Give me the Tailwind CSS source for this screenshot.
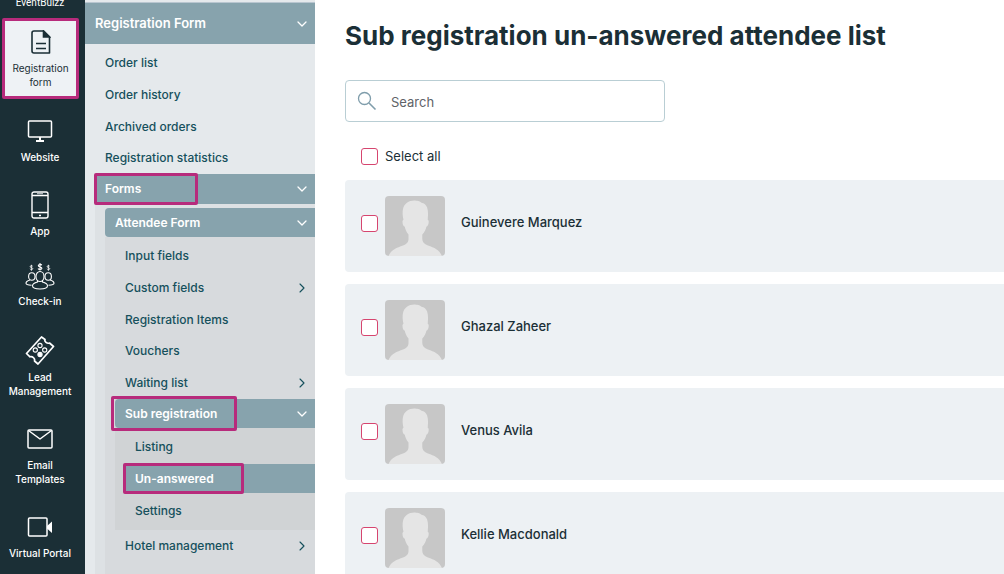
<!DOCTYPE html>
<html lang="en">
<head>
  <meta charset="utf-8">
  <meta name="viewport" content="width=device-width, initial-scale=1">
  <title>Sub registration un-answered attendee list</title>
  <script src="https://cdn.jsdelivr.net/npm/@tailwindcss/browser@4"></script>
</head>
<body class="bg-white font-[Inter,sans-serif] text-[#1b2f36]">

<!-- Shared shapes -->
<svg class="hidden" aria-hidden="true">
  <symbol id="chevron-down" viewBox="0 0 10 6">
    <path fill="none" stroke="currentColor" stroke-width="1.3" stroke-linecap="round" stroke-linejoin="round" d="m1 1 4 4 4-4"/>
  </symbol>
  <symbol id="chevron-right" viewBox="0 0 6 10">
    <path fill="none" stroke="currentColor" stroke-width="1.1" stroke-linecap="round" stroke-linejoin="round" d="m1 1 4 4-4 4"/>
  </symbol>
  <symbol id="avatar" viewBox="0 0 60 60">
    <rect width="60" height="60" fill="#c7c7c7"/>
    <path fill="#e5e5e5" d="M3.500 60C6 54 12 51.500 18 49.500c4-1.400 5.500-3.500 5.500-6.500v-4.500c-2-2.200-3.200-5-3.700-7.700-1.800-.6-2.300-3-2.300-5 0-1 .3-1.800 1-2C17.500 20 17.300 16 18 13 19.300 7.500 23.500 4.500 29.500 4.500c3 0 5.500.8 7 2.200 5.500.8 7.500 6.300 6.200 17 .7.300 1 1 1 2.100 0 2.200-.7 4.400-2.300 5-.5 2.700-1.900 5.600-4.100 7.700V43c0 3 1.700 5.100 5.700 6.500 6 2 11.500 4.500 14 10.500z"/>
  </symbol>
</svg>

<div class="flex h-screen overflow-hidden">

  <!-- Icon rail -->
  <nav class="w-[85px] shrink-0 bg-[#1b2f36] text-center text-[10px] leading-[14px] font-medium text-white" aria-label="Main">
    <div class="flex h-[18px] items-end justify-center overflow-hidden pr-[5px] pb-2 font-[Roboto,sans-serif] font-normal">EventBuizz</div>
    <a href="#" class="ml-[2px] flex h-[81px] w-[77px] flex-col items-center rounded-xs border-3 border-[#b72b7c] bg-[#eef2f5] pt-[9px] font-normal text-[#1b2f36]">
      <svg class="mb-[7px] h-[24px] w-[20px]" viewBox="0 0 20 24" fill="none" stroke="currentColor" stroke-width="1.6">
        <path stroke-linejoin="round" d="M3 1h9.500l6 6v16H3a2 2 0 0 1-2-2V3a2 2 0 0 1 2-2z"/>
        <path fill="currentColor" d="M12.500 1v6h6z"/>
        <path d="M5 13.500h10M5 18.500h10"/>
      </svg>
      Registration<br>form
    </a>
    <a href="#" class="flex h-[84px] flex-col items-center pt-[21px] pr-[5px]">
      <svg class="mb-[8px] h-[22px] w-[26px]" viewBox="0 0 26 22" fill="none" stroke="currentColor" stroke-width="1.500">
        <rect x="1.500" y="1" width="23" height="16" rx="1"/>
        <path d="M13 17v4M9 21h8" stroke-width="2"/>
      </svg>
      Website
    </a>
    <a href="#" class="flex h-[71px] flex-col items-center pt-[8px] pr-[5px]">
      <svg class="mb-[5px] h-[28px] w-[18px]" viewBox="0 0 18 28" fill="none" stroke="currentColor" stroke-width="1.400">
        <rect x="1" y="1" width="16" height="26" rx="2"/>
        <path d="M1 4.500h16M1 21.500h16M8 24.500h2"/>
        <path d="M6 2.700h6" stroke-width=".8"/>
      </svg>
      App
    </a>
    <a href="#" class="flex h-[73px] flex-col items-center pt-[8px] pr-[5px]">
      <svg class="mb-[4px] h-[28px] w-[30px]" viewBox="0 0 30 28" fill="none" stroke="currentColor" stroke-width="1.100">
        <path d="M16.800 3.200c-.4-1-3.500-1.200-3.500.4 0 1.800 3.600.9 3.600 2.700 0 1.500-3.400 1.500-3.800.2M15 1v7.500"/>
        <path stroke-width=".8" d="M7.700 4.300c-.3-.8-2.500-.9-2.500.3 0 1.400 2.600.8 2.600 2.100 0 1.200-2.500 1.100-2.700.1M6.400 2.800v6M24.700 4.300c-.3-.8-2.500-.9-2.500.3 0 1.400 2.600.8 2.600 2.100 0 1.200-2.500 1.100-2.700.1M23.400 2.800v6"/>
        <ellipse cx="15" cy="14.500" rx="4" ry="5"/>
        <path d="M12.500 18.500v1.500c-3 .8-5 1.900-5 3.700 0 4.300 15 4.300 15 0 0-1.800-2-2.900-5-3.700v-1.500"/>
        <ellipse cx="6.800" cy="14.500" rx="3.200" ry="3.800"/>
        <ellipse cx="23.200" cy="14.500" rx="3.200" ry="3.800"/>
        <path d="M5 18c-2.800.8-4 1.800-4 3.200 0 1.100 2 1.900 5.500 2M25 18c2.800.8 4 1.800 4 3.200 0 1.100-2 1.900-5.500 2"/>
      </svg>
      Check-in
    </a>
    <a href="#" class="flex h-[94px] flex-col items-center pt-[8px] pr-[5px]">
      <svg class="mb-[5px] h-[30px] w-[30px]" viewBox="0 0 30 30" fill="none" stroke="currentColor" stroke-width="1.700" stroke-linejoin="round">
        <path d="M16.500 2 20 4.500c-.8 2 2 4.500 4.500 3.500l4 3.500L13 29l-3.500-3c.8-2.500-2.200-5-4.500-4.200L1.500 18.500z"/>
        <g stroke-width="1.100">
          <circle cx="15" cy="10.500" r="2.100"/>
          <circle cx="10.300" cy="15" r="2.100"/>
          <circle cx="19.700" cy="15" r="2.100"/>
          <circle cx="15" cy="19.500" r="2.100" fill="currentColor"/>
        </g>
      </svg>
      Lead<br>Management
    </a>
    <a href="#" class="flex h-[88px] flex-col items-center pt-[8px] pr-[5px]">
      <svg class="mb-[9px] h-[20px] w-[26px]" viewBox="0 0 26 20" fill="none" stroke="currentColor" stroke-width="1.500" stroke-linejoin="round">
        <rect x="1" y="1" width="24" height="18" rx="1"/>
        <path d="m1.500 1.500 11.500 8.500L24.500 1.500"/>
      </svg>
      Email<br>Templates
    </a>
    <a href="#" class="flex h-[84px] flex-col items-center pt-[8px] pr-[5px]">
      <svg class="mb-[9px] h-[20px] w-[26px]" viewBox="0 0 26 20" fill="none" stroke="currentColor" stroke-width="1.500">
        <rect x="1.500" y="1" width="18.500" height="18" rx="1"/>
        <path fill="currentColor" stroke="none" d="M20 9 25 4.500v11.500L20 11.500z"/>
      </svg>
      Virtual Portal
    </a>
  </nav>

  <!-- Section menu -->
  <nav class="w-[230px] shrink-0 bg-[#e5e9ec] text-[12px] font-medium text-[#15505c]" aria-label="Registration form">
    <div class="h-[3px] border-b border-[#b9c6d0]"></div>
    <button type="button" class="flex h-[41px] w-full items-center justify-between bg-[#87a3ad] pr-[8px] pl-[10px] text-[13px] font-semibold text-white">
      Registration Form
      <svg class="h-[6px] w-[10px]"><use href="#chevron-down"/></svg>
    </button>
    <ul class="pt-[3px]">
      <li><a href="#" class="flex h-8 items-center pl-5">Order list</a></li>
      <li><a href="#" class="flex h-8 items-center pl-5">Order history</a></li>
      <li><a href="#" class="flex h-[31px] items-center pl-5">Archived orders</a></li>
      <li><a href="#" class="flex h-8 items-center pl-5">Registration statistics</a></li>
      <li class="ml-[10px] bg-[#dde1e4]">
        <button type="button" class="relative flex h-[30px] w-full items-center justify-between bg-[#87a3ad] pr-[8px] pl-[10px] font-semibold text-white">
          Forms
          <svg class="h-[6px] w-[10px]"><use href="#chevron-down"/></svg>
          <span class="absolute -inset-y-px -left-px w-[104px] rounded-xs border-3 border-[#b72b7c]"></span>
        </button>
        <div class="pt-1 pl-[10px]">
          <button type="button" class="flex h-[29px] w-full items-center justify-between rounded-l-sm bg-[#87a3ad] pr-[8px] pl-[10px] font-semibold text-white">
            Attendee Form
            <svg class="h-[6px] w-[10px]"><use href="#chevron-down"/></svg>
          </button>
          <ul class="bg-[#d7dadd] pt-[3px]">
            <li><a href="#" class="flex h-8 items-center pl-5">Input fields</a></li>
            <li>
              <a href="#" class="flex h-8 items-center justify-between pr-[10px] pl-5">
                Custom fields
                <svg class="h-[10px] w-[6px]"><use href="#chevron-right"/></svg>
              </a>
            </li>
            <li><a href="#" class="flex h-[31px] items-center pl-5">Registration Items</a></li>
            <li><a href="#" class="flex h-8 items-center pl-5">Vouchers</a></li>
            <li>
              <a href="#" class="flex h-8 items-center justify-between pr-[10px] pl-5">
                Waiting list
                <svg class="h-[10px] w-[6px]"><use href="#chevron-right"/></svg>
              </a>
            </li>
            <li class="ml-[10px] bg-[#d0d3d5]">
              <button type="button" class="relative flex h-[29px] w-full items-center justify-between rounded-l-sm bg-[#87a3ad] pr-[8px] pl-[10px] font-semibold text-white">
                Sub registration
                <svg class="h-[6px] w-[10px]"><use href="#chevron-down"/></svg>
                <span class="absolute -inset-y-[3px] -left-1 w-[126px] rounded-xs border-3 border-[#b72b7c]"></span>
              </button>
              <ul class="pt-[3px] pb-1">
                <li><a href="#" class="flex h-8 items-center pl-5">Listing</a></li>
                <li class="pt-px pb-[2px]">
                  <a href="#" class="relative ml-[10px] flex h-[29px] items-center bg-[#87a3ad] pl-[10px] font-semibold text-white" aria-current="page">
                    Un-answered
                    <span class="absolute -inset-y-px -left-[2px] w-[121px] rounded-xs border-3 border-[#b72b7c]"></span>
                  </a>
                </li>
                <li><a href="#" class="flex h-[31px] items-center pl-5">Settings</a></li>
              </ul>
            </li>
            <li class="h-12">
              <a href="#" class="flex h-8 items-center justify-between pr-[10px] pl-5">
                Hotel management
                <svg class="h-[10px] w-[6px]"><use href="#chevron-right"/></svg>
              </a>
            </li>
          </ul>
        </div>
      </li>
    </ul>
  </nav>

  <!-- Attendee list -->
  <main class="min-w-0 flex-1 pt-[15px] pl-[30px] text-[13px]">
    <h1 class="mb-6 text-[26px] leading-[41px] font-bold">Sub registration un-answered attendee list</h1>
    <div class="flex h-[42px] w-full max-w-[320px] items-center gap-[14px] rounded-sm border border-[#b9ced4] px-[11px]">
      <svg class="h-5 w-5 shrink-0 text-[#7f9dab]" viewBox="0 0 20 20" fill="none" stroke="currentColor" stroke-width="1.300">
        <circle cx="7.500" cy="7.500" r="6"/>
        <path d="m12 12 6.500 6.500" stroke-width="1.600"/>
      </svg>
      <input type="search" placeholder="Search" aria-label="Search" class="h-10 min-w-0 flex-1 pt-px outline-none placeholder:text-[#5f6368]">
    </div>
    <label class="mt-[25px] mb-[14px] flex h-[19px] items-center gap-[7px] pl-4">
      <input type="checkbox" class="h-[17px] w-[17px] appearance-none rounded-[3px] border border-[#d6456f] bg-white">
      Select all
    </label>
    <ul class="space-y-3 font-medium">
      <li>
        <label class="flex h-[92px] items-center rounded-l-sm bg-[#edf1f4] pl-4">
          <input type="checkbox" class="mr-[7px] mb-[5px] h-[17px] w-[17px] appearance-none rounded-[3px] border border-[#d6456f] bg-white">
          <svg class="mr-4 h-[60px] w-[60px] rounded-sm"><use href="#avatar"/></svg>
          <span class="pb-[6px]">Guinevere Marquez</span>
        </label>
      </li>
      <li>
        <label class="flex h-[92px] items-center rounded-l-sm bg-[#edf1f4] pl-4">
          <input type="checkbox" class="mr-[7px] mb-[5px] h-[17px] w-[17px] appearance-none rounded-[3px] border border-[#d6456f] bg-white">
          <svg class="mr-4 h-[60px] w-[60px] rounded-sm"><use href="#avatar"/></svg>
          <span class="pb-[6px]">Ghazal Zaheer</span>
        </label>
      </li>
      <li>
        <label class="flex h-[92px] items-center rounded-l-sm bg-[#edf1f4] pl-4">
          <input type="checkbox" class="mr-[7px] mb-[5px] h-[17px] w-[17px] appearance-none rounded-[3px] border border-[#d6456f] bg-white">
          <svg class="mr-4 h-[60px] w-[60px] rounded-sm"><use href="#avatar"/></svg>
          <span class="pb-[6px]">Venus Avila</span>
        </label>
      </li>
      <li>
        <label class="flex h-[92px] items-center rounded-l-sm bg-[#edf1f4] pl-4">
          <input type="checkbox" class="mr-[7px] mb-[5px] h-[17px] w-[17px] appearance-none rounded-[3px] border border-[#d6456f] bg-white">
          <svg class="mr-4 h-[60px] w-[60px] rounded-sm"><use href="#avatar"/></svg>
          <span class="pb-[6px]">Kellie Macdonald</span>
        </label>
      </li>
    </ul>
  </main>

</div>
</body>
</html>
